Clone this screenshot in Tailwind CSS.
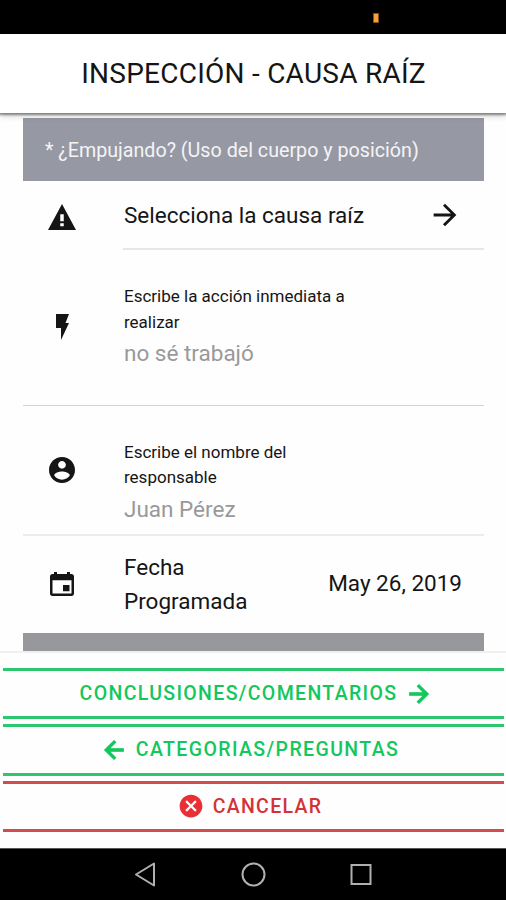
<!DOCTYPE html>
<html lang="es">
<head>
    <meta charset="UTF-8">
    <meta name="viewport" content="width=device-width, initial-scale=1.0">
    <title>Inspección - Causa raíz</title>
    <script src="https://cdn.jsdelivr.net/npm/@tailwindcss/browser@4"></script>
</head>
<body class="flex h-[900px] w-[506px] flex-col overflow-hidden bg-[#fefefe] font-['Roboto',sans-serif] text-[#151515]">
    <!-- Barra de estado -->
    <div class="flex h-[34px] shrink-0 justify-end bg-black pt-[13px] pr-[127px]">
        <span class="h-[10px] w-[6px] border border-[#8a4f12] bg-[#f9a03c]"></span>
    </div>

    <header class="relative flex h-[79px] shrink-0 items-center justify-center bg-white pt-px pl-px shadow-[0_1px_2px_1px_rgba(0,0,0,0.4),0_3px_6px_rgba(0,0,0,0.18)]">
        <h1 class="text-[28px] leading-8 tracking-[0.25px] whitespace-nowrap">INSPECCIÓN - CAUSA RAÍZ</h1>
    </header>

    <main class="flex h-[538px] shrink-0 flex-col overflow-hidden pt-[5px] pr-[22px] pl-[23px]">
        <div class="flex h-[63px] shrink-0 items-center bg-[#9699a3] px-[22px] pt-[3px]">
            <h2 class="text-[19.7px] whitespace-nowrap text-[#f4f4f6]">* ¿Empujando? (Uso del cuerpo y posición)</h2>
        </div>

        <div class="flex h-[69px] shrink-0 items-center pl-[23px]">
            <svg class="mt-0.5 h-8 w-8" viewBox="0 0 512 512" fill="currentColor"><path d="M32 464h448L256 48 32 464zm252-60h-56v-48h56v48zm0-80h-56V212h56v112z"/></svg>
            <div class="ml-[45px] flex h-full flex-1 items-center justify-between border-b-2 border-[#e6e6e6] pt-0.5 pr-[22px] pl-px">
                <span class="text-[22.5px] whitespace-nowrap">Selecciona la causa raíz</span>
                <svg class="mb-0.5 h-[34px] w-[34px]" viewBox="0 0 512 512" fill="currentColor"><path d="M85 277.375h259.704L225.002 397.077 256 427l171-171L256 85l-29.922 29.924 118.626 119.701H85v42.75z"/></svg>
            </div>
        </div>

        <div class="flex h-[156px] shrink-0 items-center border-b border-[#d4d4d4] pl-[23px]">
            <svg class="mb-0.5 h-8 w-8" viewBox="0 0 32 32" fill="currentColor"><path d="M10 3h13l-3.500 9h3.500l-8 17V17h-5z"/></svg>
            <div class="ml-[46px] flex flex-col pt-px">
                <label class="w-[240px] text-[17px] leading-[25.5px]">Escribe la acción inmediata a<br>realizar</label>
                <span class="text-[22.5px] leading-[37px] text-[#999]">no sé trabajó</span>
            </div>
        </div>

        <div class="flex h-[130px] shrink-0 items-center border-b-2 border-[#ececec] pl-[23px]">
            <svg class="h-8 w-8" viewBox="0 0 512 512" fill="currentColor"><path d="M256 48C140.549 48 48 140.549 48 256c0 115.451 92.549 208 208 208s208-92.549 208-208c0-115.451-92.549-208-208-208zm0 62.4c34.3 0 62.4 28.1 62.4 62.4s-28.1 62.4-62.4 62.4-62.4-28.1-62.4-62.4 28.1-62.4 62.4-62.4zm0 300.4c-51.7 0-97.9-26.4-124.8-66.6 1-41.6 83.2-64.5 124.8-64.5s123.8 22.9 124.8 64.5c-26.9 40.2-73.1 66.6-124.8 66.6z"/></svg>
            <div class="ml-[46px] flex flex-col pt-[27px]">
                <label class="w-[240px] text-[17px] leading-[25.5px]">Escribe el nombre del<br>responsable</label>
                <span class="text-[22.5px] leading-[37px] text-[#999]">Juan Pérez</span>
            </div>
        </div>

        <div class="flex h-[97px] shrink-0 items-center pr-[22px] pb-0.5 pl-[23px]">
            <svg class="mt-px h-8 w-8" viewBox="0 0 512 512" fill="currentColor"><path d="M376 272H272v100h104v-100zm-40-208v32h-160V64h-48v32h-24.01c-22.002 0-40 17.998-40 40v272c0 22.002 17.998 40 40 40h304.01c22.002 0 40-17.998 40-40V136c0-22.002-17.998-40-40-40h-24V64h-48zm72 344h-304.01V196h304.01v212z"/></svg>
            <span class="ml-[46px] text-[22.5px] leading-[34px]">Fecha<br>Programada</span>
            <span class="ml-auto text-[22.5px] whitespace-nowrap">May 26, 2019</span>
        </div>

        <div class="h-[18px] shrink-0 bg-[#97989c]"></div>
    </main>

    <footer class="flex h-[197px] shrink-0 flex-col gap-[5px] border-t-2 border-[#f0f0f0] pt-[15px] pr-[2px] pl-[3px] text-[19.5px] font-medium">
        <button class="flex h-[51.3px] items-center justify-center gap-[8px] border-y-[3px] border-[#2cc76e] pl-[6px] text-[#12c75c]">
            <span class="tracking-[1.35px] whitespace-nowrap">CONCLUSIONES/COMENTARIOS</span>
            <svg class="h-7 w-7" viewBox="0 0 512 512" fill="currentColor" stroke="currentColor" stroke-width="20"><path d="M85 277.375h259.704L225.002 397.077 256 427l171-171L256 85l-29.922 29.924 118.626 119.701H85v42.75z"/></svg>
        </button>
        <button class="flex h-[51.3px] items-center justify-center gap-[8px] border-y-[3px] border-[#2cc76e] pr-[8px] text-[#12c75c]">
            <svg class="h-7 w-7" viewBox="0 0 512 512" fill="currentColor" stroke="currentColor" stroke-width="20"><path d="M427 234.625H167.296l119.702-119.702L256 85 85 256l171 171 29.922-29.924-118.626-119.701H427v-42.75z"/></svg>
            <span class="tracking-[1.4px] whitespace-nowrap">CATEGORIAS/PREGUNTAS</span>
        </button>
        <button class="flex h-[51.3px] items-center justify-center gap-[8px] border-y-[3px] border-[#d14c4c] pr-[8px] text-[#d23338]">
            <svg class="h-7 w-7 text-[#e92f33]" viewBox="0 0 512 512" fill="currentColor"><path d="M256 48C140.559 48 48 140.559 48 256c0 115.436 92.559 208 208 208 115.435 0 208-92.564 208-208 0-115.441-92.564-208-208-208zm104.002 282.881l-29.12 29.117L256 285.117l-74.881 74.881-29.121-29.117L226.881 256l-74.883-74.881 29.121-29.116L256 226.881l74.881-74.878 29.12 29.116L285.119 256l74.883 74.881z"/></svg>
            <span class="tracking-[1.3px] whitespace-nowrap">CANCELAR</span>
        </button>
    </footer>

    <!-- Botones de navegación -->
    <nav class="flex h-[52px] shrink-0 items-center justify-between border-t border-[#555] bg-black px-[133px] text-[#b0b0b0]">
        <svg class="h-[26px] w-[24px]" viewBox="0 0 24 26" fill="none" stroke="currentColor" stroke-width="2" stroke-linejoin="round"><path d="M21 1.500v22L3 12.500z"/></svg>
        <svg class="h-[26px] w-[26px]" viewBox="0 0 26 26" fill="none" stroke="currentColor" stroke-width="2"><circle cx="13.500" cy="12.500" r="11"/></svg>
        <svg class="h-[24px] w-[24px]" viewBox="0 0 24 24" fill="none" stroke="currentColor" stroke-width="2"><path d="M2.500 2h19v19h-19z"/></svg>
    </nav>
</body>
</html>
